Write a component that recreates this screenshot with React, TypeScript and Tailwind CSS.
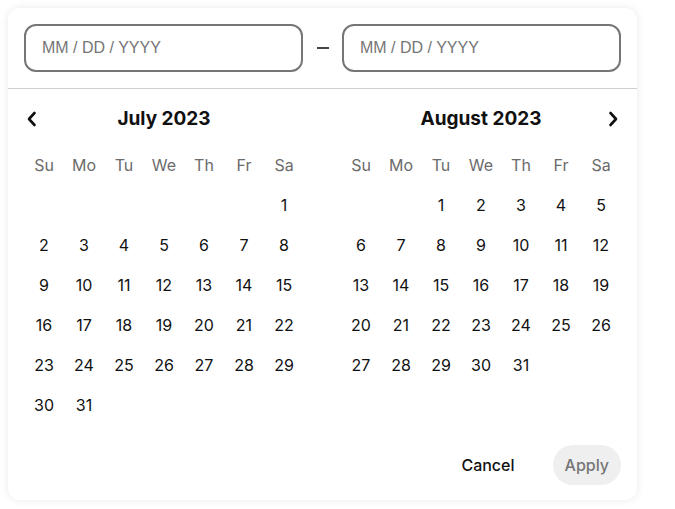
import React from 'react'

const WEEKDAYS = ['Su', 'Mo', 'Tu', 'We', 'Th', 'Fr', 'Sa']

function Chevron({ dir }: { dir: 'left' | 'right' }) {
  return (
    <svg width="10" height="16" viewBox="0 0 10 16" fill="none">
      <path
        d={dir === 'left' ? 'M7.5 2L2 8l5.5 6' : 'M2.5 2L8 8l-5.5 6'}
        stroke="#111"
        strokeWidth="2.6"
        strokeLinecap="round"
        strokeLinejoin="round"
      />
    </svg>
  )
}

function Month({ title, offset, days, nav }: { title: string; offset: number; days: number; nav: 'left' | 'right' }) {
  const cells: (number | null)[] = []
  for (let i = 0; i < offset; i++) cells.push(null)
  for (let d = 1; d <= days; d++) cells.push(d)

  return (
    <div className="w-[280px]">
      <div className="flex h-10 items-center pt-[2px]">
        <div className="flex w-4 justify-center">{nav === 'left' && <Chevron dir="left" />}</div>
        <div className="flex-1 text-center text-[19px] font-bold text-[#111]">{title}</div>
        <div className="flex w-4 justify-center">{nav === 'right' && <Chevron dir="right" />}</div>
      </div>
      <div className="mt-[7px] grid grid-cols-7">
        {WEEKDAYS.map((w) => (
          <div key={w} className="flex h-10 items-center justify-center text-base text-[#6b6b6b]">
            {w}
          </div>
        ))}
        {cells.map((c, i) => (
          <div key={i} className="flex h-10 items-center justify-center text-base text-[#111]">
            {c}
          </div>
        ))}
      </div>
    </div>
  )
}

function DateInput() {
  return (
    <div className="flex h-12 w-[279px] items-center rounded-xl border-2 border-[#767676] px-4 font-['Liberation_Sans',sans-serif] text-base text-[#767676]">
      MM / DD / YYYY
    </div>
  )
}

export default function App() {
  return (
    <div className="min-h-screen bg-white pl-2 pt-2 font-['Inter',sans-serif]">
      <div className="w-[629px] rounded-xl bg-white shadow-[0_0_8px_rgba(0,0,0,0.09)]">
        <div className="flex items-center border-b border-[#cfcfcf] px-4 pb-4 pt-4">
          <DateInput />
          <div className="flex w-[39px] justify-center">
            <div className="h-[1.5px] w-3 bg-[#444]" />
          </div>
          <DateInput />
        </div>
        <div className="flex justify-between px-4 pt-[9px]">
          <Month title="July 2023" offset={6} days={31} nav="left" />
          <Month title="August 2023" offset={2} days={31} nav="right" />
        </div>
        <div className="flex items-center justify-end gap-[26px] px-4 pb-[15px] pt-5">
          <button className="h-10 px-3 text-base font-medium text-[#111]">Cancel</button>
          <button className="h-10 rounded-full bg-[#efefef] px-3 text-base font-medium text-[#767676]">Apply</button>
        </div>
      </div>
    </div>
  )
}
